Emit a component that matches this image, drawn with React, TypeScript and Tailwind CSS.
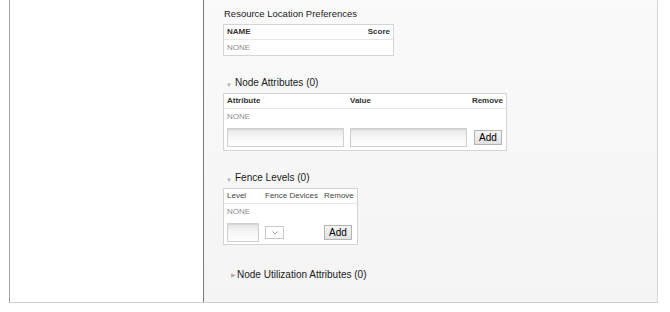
import { ReactNode } from "react";

function Box({ width, children }: { width: string; children: ReactNode }) {
  return <div className={`${width} border border-[#d4d4d4] bg-white`}>{children}</div>;
}

function TextInput({ width }: { width: string }) {
  return (
    <div
      className={`${width} h-[19px] border border-[#d0d0d0] bg-gradient-to-b from-[#e6e6e6] via-[#f7f7f7] to-[#fdfdfd] shadow-[inset_0_1px_1px_rgba(0,0,0,0.08)]`}
    />
  );
}

function AddButton() {
  return (
    <button className="block w-[28px] h-[15px] border border-[#b5b5b5] bg-gradient-to-b from-[#f4f4f4] to-[#e2e2e2] text-[10px] leading-[13px] text-black">
      Add
    </button>
  );
}

function SectionTitle({ open, children }: { open: boolean; children: ReactNode }) {
  return (
    <div className="flex items-center h-[14px] text-[10px] text-[#1a1a1a]">
      {open ? (
        <span className="w-[8px] ml-[3px] mr-[1px] mt-[5px] text-[6px] leading-none text-[#b0b0b0]">▼</span>
      ) : (
        <span className="w-[6px] ml-[8px] mt-[2px] text-[6px] leading-none text-[#b0b0b0]">▶</span>
      )}
      <span>{children}</span>
    </div>
  );
}

export default function App() {
  return (
    <div className="w-[670px] h-[312px] bg-white" style={{ fontFamily: "'Liberation Sans', Arial, sans-serif" }}>
      <div className="ml-[9px] w-[649px] h-[303px] flex border-l border-l-[#a0a0a0] border-r border-r-[#d4d4d4] border-b border-b-[#cfcfcf]">
        <div className="w-[194px] bg-white border-r border-r-[#7a7a7a]" />
        <div className="flex-1 bg-gradient-to-b from-[#fafafa] to-[#f4f4f4] pl-[19px] pt-[8px]">
          <div className="ml-[1px] text-[9.5px] leading-[12px] text-[#1a1a1a] mb-[4px]">Resource Location Preferences</div>
          <Box width="w-[171px]">
            <div className="flex justify-between px-[3px] h-[15px] items-center border-b border-[#e6e6e6] text-[8px] font-bold text-[#333]">
              <span>NAME</span>
              <span>Score</span>
            </div>
            <div className="px-[3px] h-[15px] flex items-center text-[8px] text-[#8c8c8c]">NONE</div>
          </Box>

          <div className="mt-[19px]">
            <SectionTitle open>Node Attributes (0)</SectionTitle>
          </div>
          <div className="mt-[4px]">
            <Box width="w-[284px]">
              <div className="flex px-[3px] h-[15px] items-center border-b border-[#e6e6e6] text-[8px] font-bold text-[#333]">
                <span className="w-[123px]">Attribute</span>
                <span className="flex-1">Value</span>
                <span>Remove</span>
              </div>
              <div className="px-[3px] h-[16px] flex items-center text-[8px] text-[#8c8c8c]">NONE</div>
              <div className="flex items-center px-[3px] pt-[3px] pb-[3px] gap-[6px]">
                <TextInput width="w-[117px]" />
                <TextInput width="w-[117px]" />
                <div className="ml-[1px]">
                  <AddButton />
                </div>
              </div>
            </Box>
          </div>

          <div className="mt-[19px]">
            <SectionTitle open>Fence Levels (0)</SectionTitle>
          </div>
          <div className="mt-[4px]">
            <Box width="w-[135px]">
              <div className="flex px-[3px] h-[15px] items-center border-b border-[#e6e6e6] text-[8px] text-[#444]">
                <span className="w-[38px]">Level</span>
                <span className="w-[59px]">Fence Devices</span>
                <span>Remove</span>
              </div>
              <div className="px-[3px] h-[16px] flex items-center text-[8px] text-[#8c8c8c]">NONE</div>
              <div className="flex items-center px-[3px] pt-[3px] pb-[2px]">
                <TextInput width="w-[32px]" />
                <div className="ml-[6px] w-[19px] h-[13px] border border-[#c8c8c8] bg-white flex items-center justify-center">
                  <svg width="6" height="4" viewBox="0 0 6 4">
                    <path d="M0.5 0.5 L3 3 L5.5 0.5" fill="none" stroke="#888" strokeWidth="0.8" />
                  </svg>
                </div>
                <div className="ml-[40px]">
                  <AddButton />
                </div>
              </div>
            </Box>
          </div>

          <div className="mt-[22px]">
            <SectionTitle open={false}>Node Utilization Attributes (0)</SectionTitle>
          </div>
        </div>
      </div>
    </div>
  );
}
